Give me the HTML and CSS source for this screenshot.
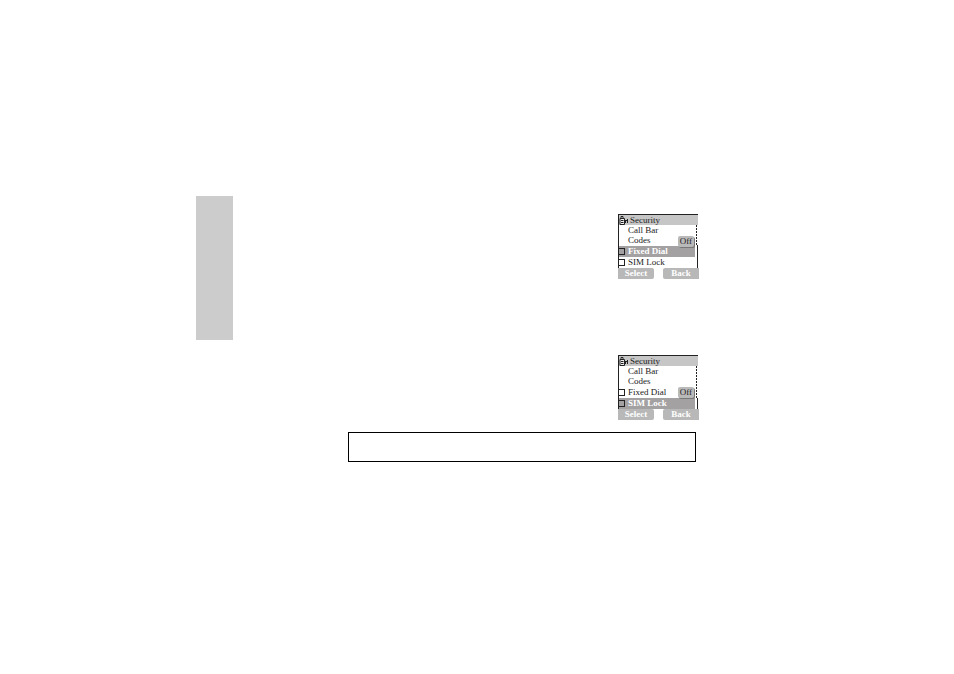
FILE: index.html
```html
<!DOCTYPE html>
<html lang="en">
<head>
<meta charset="utf-8">
<title>Security</title>
<link rel="stylesheet" href="styles.css">
</head>
<body>
<div class="page">
  <aside class="tab"></aside>
  <main class="content">
    <section class="phone">
      <header class="title">
        <svg class="icon" width="10" height="9" viewBox="0 0 10 9" aria-hidden="true"><path d="M1 2.500h4.500v6H1zM2 2V.5h2V2" fill="#eee" stroke="#222"/><path d="M2 4.500h2.500M2 6.500h2.500M5 4.500h4M8.500 3v4M6.500 4v3" fill="none" stroke="#222"/></svg>
        <h2>Security</h2>
      </header>
      <ul class="menu scroll-upper">
        <li>Call Bar</li>
        <li>Codes</li>
        <li class="selected"><label><input type="checkbox">Fixed Dial</label></li>
        <li><label><input type="checkbox">SIM Lock</label></li>
      </ul>
      <span class="state state-upper">Off</span>
      <footer class="keys"><button>Select</button><button>Back</button></footer>
    </section>
    <section class="phone">
      <header class="title">
        <svg class="icon" width="10" height="9" viewBox="0 0 10 9" aria-hidden="true"><path d="M1 2.500h4.500v6H1zM2 2V.5h2V2" fill="#eee" stroke="#222"/><path d="M2 4.500h2.500M2 6.500h2.500M5 4.500h4M8.500 3v4M6.500 4v3" fill="none" stroke="#222"/></svg>
        <h2>Security</h2>
      </header>
      <ul class="menu scroll-lower">
        <li>Call Bar</li>
        <li>Codes</li>
        <li><label><input type="checkbox">Fixed Dial</label></li>
        <li class="selected"><label><input type="checkbox">SIM Lock</label></li>
      </ul>
      <span class="state state-lower">Off</span>
      <footer class="keys"><button>Select</button><button>Back</button></footer>
    </section>
    <div class="note"></div>
  </main>
</div>
</body>
</html>
```
FILE: styles.css
```css
* { box-sizing: border-box; }
body { margin: 0; background: #fff; font: 9px/10px "Liberation Serif", serif; color: #222; }
.page { display: flex; align-items: flex-start; padding: 196px 255px 0 196px; }
.tab { width: 37px; height: 144px; background: #ccc; }
.content { flex: 1; display: flex; flex-direction: column; margin-left: 115px; padding-top: 18px; }
.phone { position: relative; align-self: flex-end; width: 81px; margin-bottom: 76px; }
.phone + .phone { margin-bottom: 12px; }
.title { display: flex; align-items: center; gap: 1px; height: 11px; margin-right: 1px; border: 1px solid #222; border-width: 1px 0 0 1px; background: #c6c6c6; }
.title h2 { margin: 0; font-size: 9px; line-height: 10px; font-weight: normal; }
.icon { flex: none; }
.menu { position: relative; display: grid; grid-template-rows: 10px 11px 11px 11px; margin: 0; padding: 0; list-style: none; border-left: 1px solid #222; }
.menu::before { content: ""; position: absolute; right: 2px; top: 0; width: 1px; background: repeating-linear-gradient(#222 0 2px, #fff 2px 3px); }
.menu::after { content: ""; position: absolute; right: 1px; bottom: 0; width: 1px; background: #222; }
.scroll-upper::before { height: 20px; }
.scroll-upper::after { height: 23px; }
.scroll-lower::before { height: 32px; }
.scroll-lower::after { height: 11px; }
.menu li { padding-left: 9px; margin-right: 4px; line-height: 11px; white-space: nowrap; }
.menu .selected { background: #a3a1a2; color: #fff; font-weight: bold; }
.menu li:has(input) { padding-left: 0; }
.menu label { display: flex; align-items: center; gap: 3px; }
.menu input { appearance: none; width: 6px; height: 7px; margin: 0; border: 1px solid #222; border-left: 0; background: transparent; }
.state { position: absolute; right: 5px; padding: 0 2px; line-height: 11px; background: #b9b9b9; border-radius: 2px; box-shadow: 1px 1px 0 #777; }
.state-upper { top: 22px; }
.state-lower { top: 32px; }
.keys { display: flex; justify-content: space-between; }
.keys button { width: 36px; height: 11px; margin: 0; padding: 0; border: 0; border-radius: 0 2px 2px 0; background: #b8b8b8; color: #fff; font: bold 9px/11px "Liberation Serif", serif; }
.keys button:last-child { border-radius: 2px 0 0 2px; }
.note { height: 30px; margin-right: 3px; border: 1px solid #000; }
```
